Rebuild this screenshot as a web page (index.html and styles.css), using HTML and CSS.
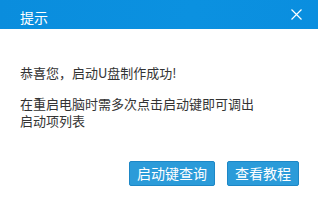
FILE: index.html
```html
<!DOCTYPE html>
<html lang="zh-CN">
<head>
    <meta charset="UTF-8">
    <title>提示</title>
    <link rel="stylesheet" href="styles.css">
</head>
<body>
    <div class="dialog">
        <div class="header">
            <span class="title">提示</span>
            <svg class="close" width="11" height="11" viewBox="0 0 11 11">
                <path d="M0.5 0.5 L10.5 10.5 M10.5 0.5 L0.5 10.5" stroke="#fff" stroke-width="1.2"/>
            </svg>
        </div>
        <div class="content">
            <p>恭喜您，启动U盘制作成功!</p>
            <p>在重启电脑时需多次点击启动键即可调出<br>启动项列表</p>
        </div>
        <div class="buttons">
            <button>启动键查询</button>
            <button>查看教程</button>
        </div>
    </div>
</body>
</html>
```

FILE: styles.css
```css
body {
    margin: 0;
    padding: 0;
    font-family: "Microsoft YaHei", "Noto Sans CJK SC", sans-serif;
    background-color: #fff;
}
.dialog {
    width: 318px;
    height: 206px;
    background-color: #fff;
}
.header {
    height: 29px;
    background: linear-gradient(100deg, #0a8ddd 0%, #0b91e0 60%, #0a8edf 100%);
    display: flex;
    align-items: center;
    justify-content: space-between;
    padding: 0 16px 0 20px;
}
.title {
    color: #fff;
    font-size: 14px;
    line-height: 14px;
    padding-top: 4px;
}
.close {
    display: block;
}
.content {
    padding: 35px 20px 0 20px;
    font-size: 13px;
    line-height: 17px;
    color: #333;
}
.content p {
    margin: 0 0 14px 0;
}
.buttons {
    display: flex;
    justify-content: flex-end;
    gap: 12px;
    padding: 18px 19px 0 0;
}
.buttons button {
    height: 25px;
    padding: 0 7px;
    background-color: #2b9bd9;
    border: 1px solid #1d87c6;
    border-radius: 2px;
    color: #fff;
    font-family: inherit;
    font-size: 14px;
    line-height: 23px;
}
```
